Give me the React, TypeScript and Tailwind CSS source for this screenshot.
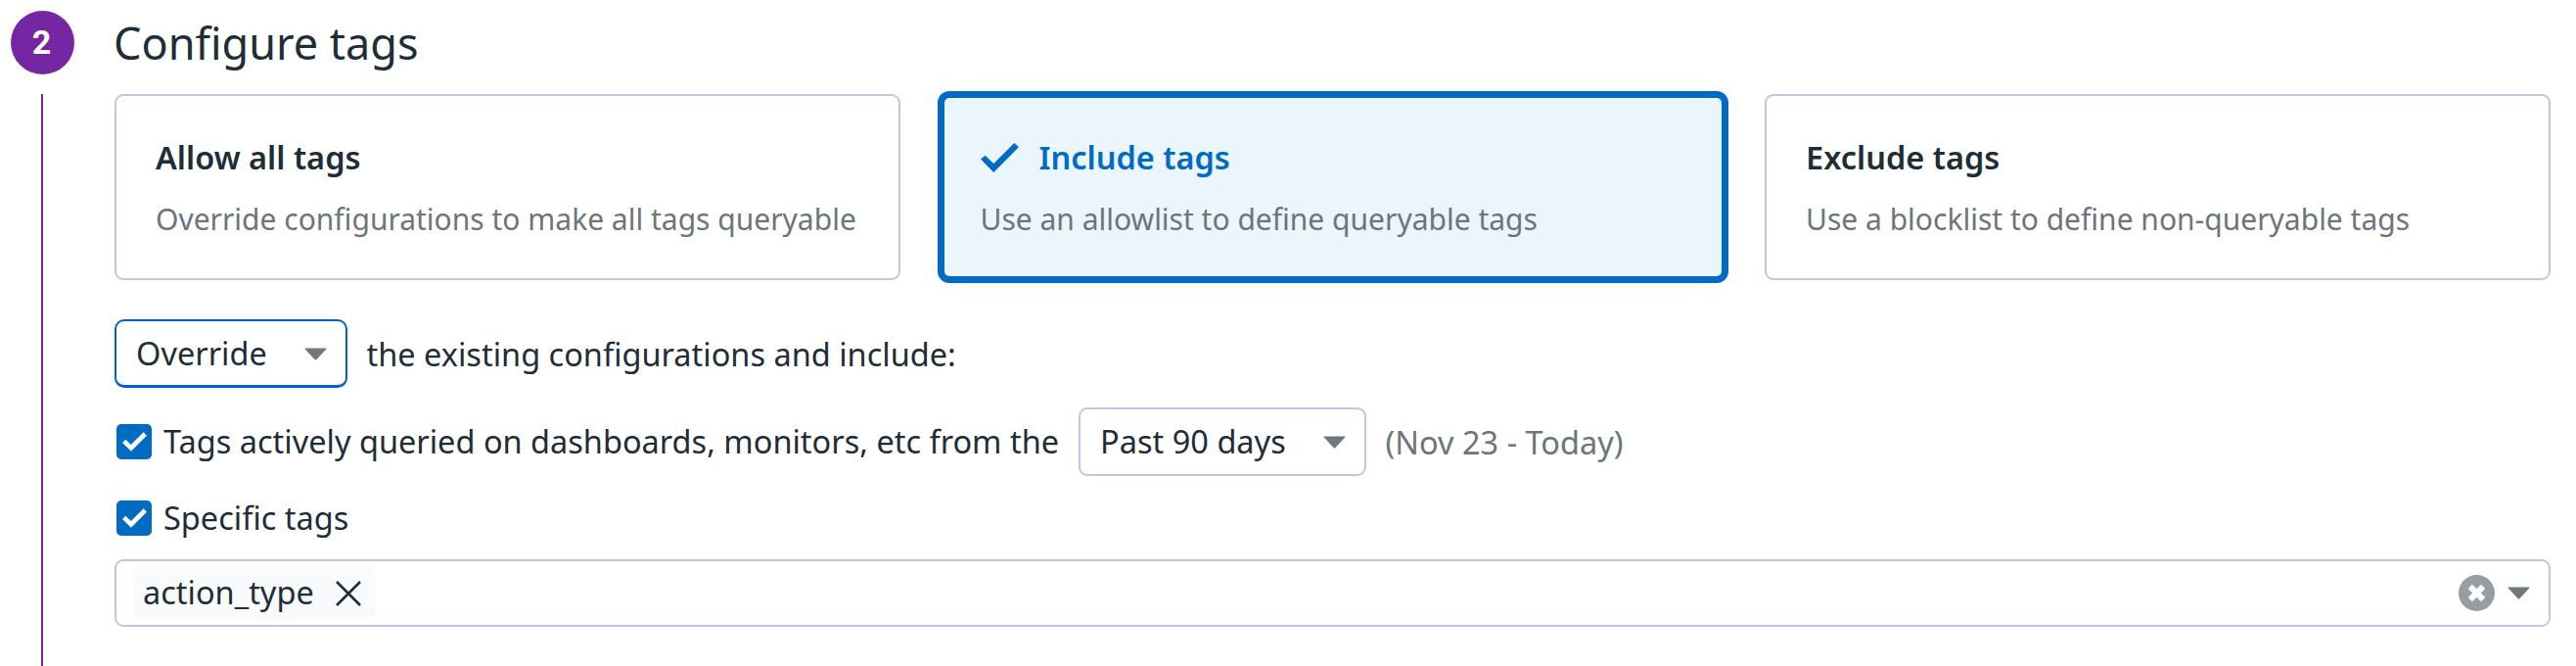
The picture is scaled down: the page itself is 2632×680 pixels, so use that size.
import React from "react";

function Caret() {
  return (
    <svg viewBox="0 0 23 13" className="h-[13px] w-[23px] shrink-0 fill-[#6f787f]">
      <path d="M1 0.5 H22 Q23 0.5 22.3 1.5 L12.5 12 Q11.5 13 10.5 12 L0.7 1.5 Q0 0.5 1 0.5Z" />
    </svg>
  );
}

function Checkbox() {
  return (
    <span className="flex size-9 shrink-0 items-center justify-center rounded-[5px] bg-[#006bc2]">
      <svg viewBox="0 0 76 60" className="h-5 w-[25px] fill-white">
        <path d="M0 33 10 23 27 39 66 0 76 11 27 60Z" />
      </svg>
    </span>
  );
}

function Card({ title, text, selected }: { title: string; text: string; selected?: boolean }) {
  return (
    <div
      className={
        selected
          ? "flex h-[196px] w-[808px] flex-col rounded-[12px] border-[7px] border-[#006bc2] bg-[#eaf5fc] pt-[37px] pl-[37px]"
          : "my-[3px] flex h-[190px] w-[803px] flex-col rounded-[9px] border-2 border-[#c0c7de] pt-[39px] pl-[40px]"
      }
    >
      <div className={selected ? "flex items-center gap-[21px] text-[#006bc2]" : "flex items-center text-[#1f2d37]"}>
        {selected && (
          <svg viewBox="0 0 118 91" className="h-[30px] w-[39px] fill-current">
            <path d="M0 50 14 39 40 64 104 0 118 13 40 91Z" />
          </svg>
        )}
        <h3 className="text-[32.5px] leading-[48px] font-semibold">{title}</h3>
      </div>
      <p className="mt-4 text-[30px] leading-[46px] whitespace-nowrap text-[#6c757b]">{text}</p>
    </div>
  );
}

export default function App() {
  return (
    <main className="flex h-[680px] w-[2632px] overflow-hidden bg-white font-['Noto_Sans',sans-serif] text-[32.5px] text-[#1f2d37]">
      <aside className="flex w-[117px] shrink-0 flex-col pl-[11px]">
        <div className="mt-[11px] flex size-[65px] items-center justify-center rounded-full bg-[#7526a3] pr-[2px] font-['Roboto',sans-serif] text-[34px] font-bold text-white">2</div>
        <div className="mt-5 ml-[31px] w-[2px] flex-1 bg-[#7526a3]" />
      </aside>
      <section className="flex w-[2489px] flex-col">
        <h1 className="-ml-px mt-[11px] h-[82px] text-[45px] leading-[66px]">Configure tags</h1>
        <div className="flex justify-between">
          <Card title="Allow all tags" text="Override configurations to make all tags queryable" />
          <Card selected title="Include tags" text="Use an allowlist to define queryable tags" />
          <Card title="Exclude tags" text="Use a blocklist to define non-queryable tags" />
        </div>
        <div className="mt-[37px] flex h-[70px] items-center">
          <div className="flex h-[70px] w-[238px] items-center justify-between rounded-[10px] border-2 border-b-[3px] border-[#0060cc] pt-px pr-[19px] pl-[20px]">
            <span>Override</span><Caret />
          </div>
          <span className="mt-[2px] ml-[19.5px]">the existing configurations and include:</span>
        </div>
        <div className="mt-5 flex h-[70px] items-center pl-[2px]">
          <Checkbox />
          <span className="ml-3 pt-px">Tags actively queried on dashboards, monitors, etc from the</span>
          <div className="ml-5 flex h-[70px] w-[294px] items-center justify-between rounded-[9px] border-2 border-[#c0c7de] pr-[19px] pl-5">
            <span>Past 90 days</span><Caret />
          </div>
          <span className="ml-[19.5px] pt-[2px] text-[#6c757b]">(Nov 23 - Today)</span>
        </div>
        <div className="mt-[19px] flex h-12 items-center gap-3 pl-[2px]">
          <Checkbox />
          <span>Specific tags</span>
        </div>
        <div className="mt-[18px] flex h-[69px] items-center rounded-[9px] border-2 border-[#c0c7de] pr-[19px] pl-[17px]">
          <div className="flex h-[53px] w-[248px] items-center justify-between rounded-[10px] bg-[#f9fafc] pr-[15px] pl-[10px]">
            <span>action_type</span>
            <svg viewBox="0 0 26 26" className="size-[26px]" fill="none" stroke="#1f2d37" strokeWidth="2.6"><path d="M1 1 25 25M25 1 1 25" /></svg>
          </div>
          <svg viewBox="0 0 37 37" className="mr-[13px] ml-auto size-[37px]"><circle cx="18.5" cy="18.5" r="18.5" fill="#979da1" /><path d="M11.8 11.8 25.2 25.2M25.2 11.8 11.8 25.2" stroke="white" strokeWidth="6" /></svg>
          <Caret />
        </div>
      </section>
    </main>
  );
}
